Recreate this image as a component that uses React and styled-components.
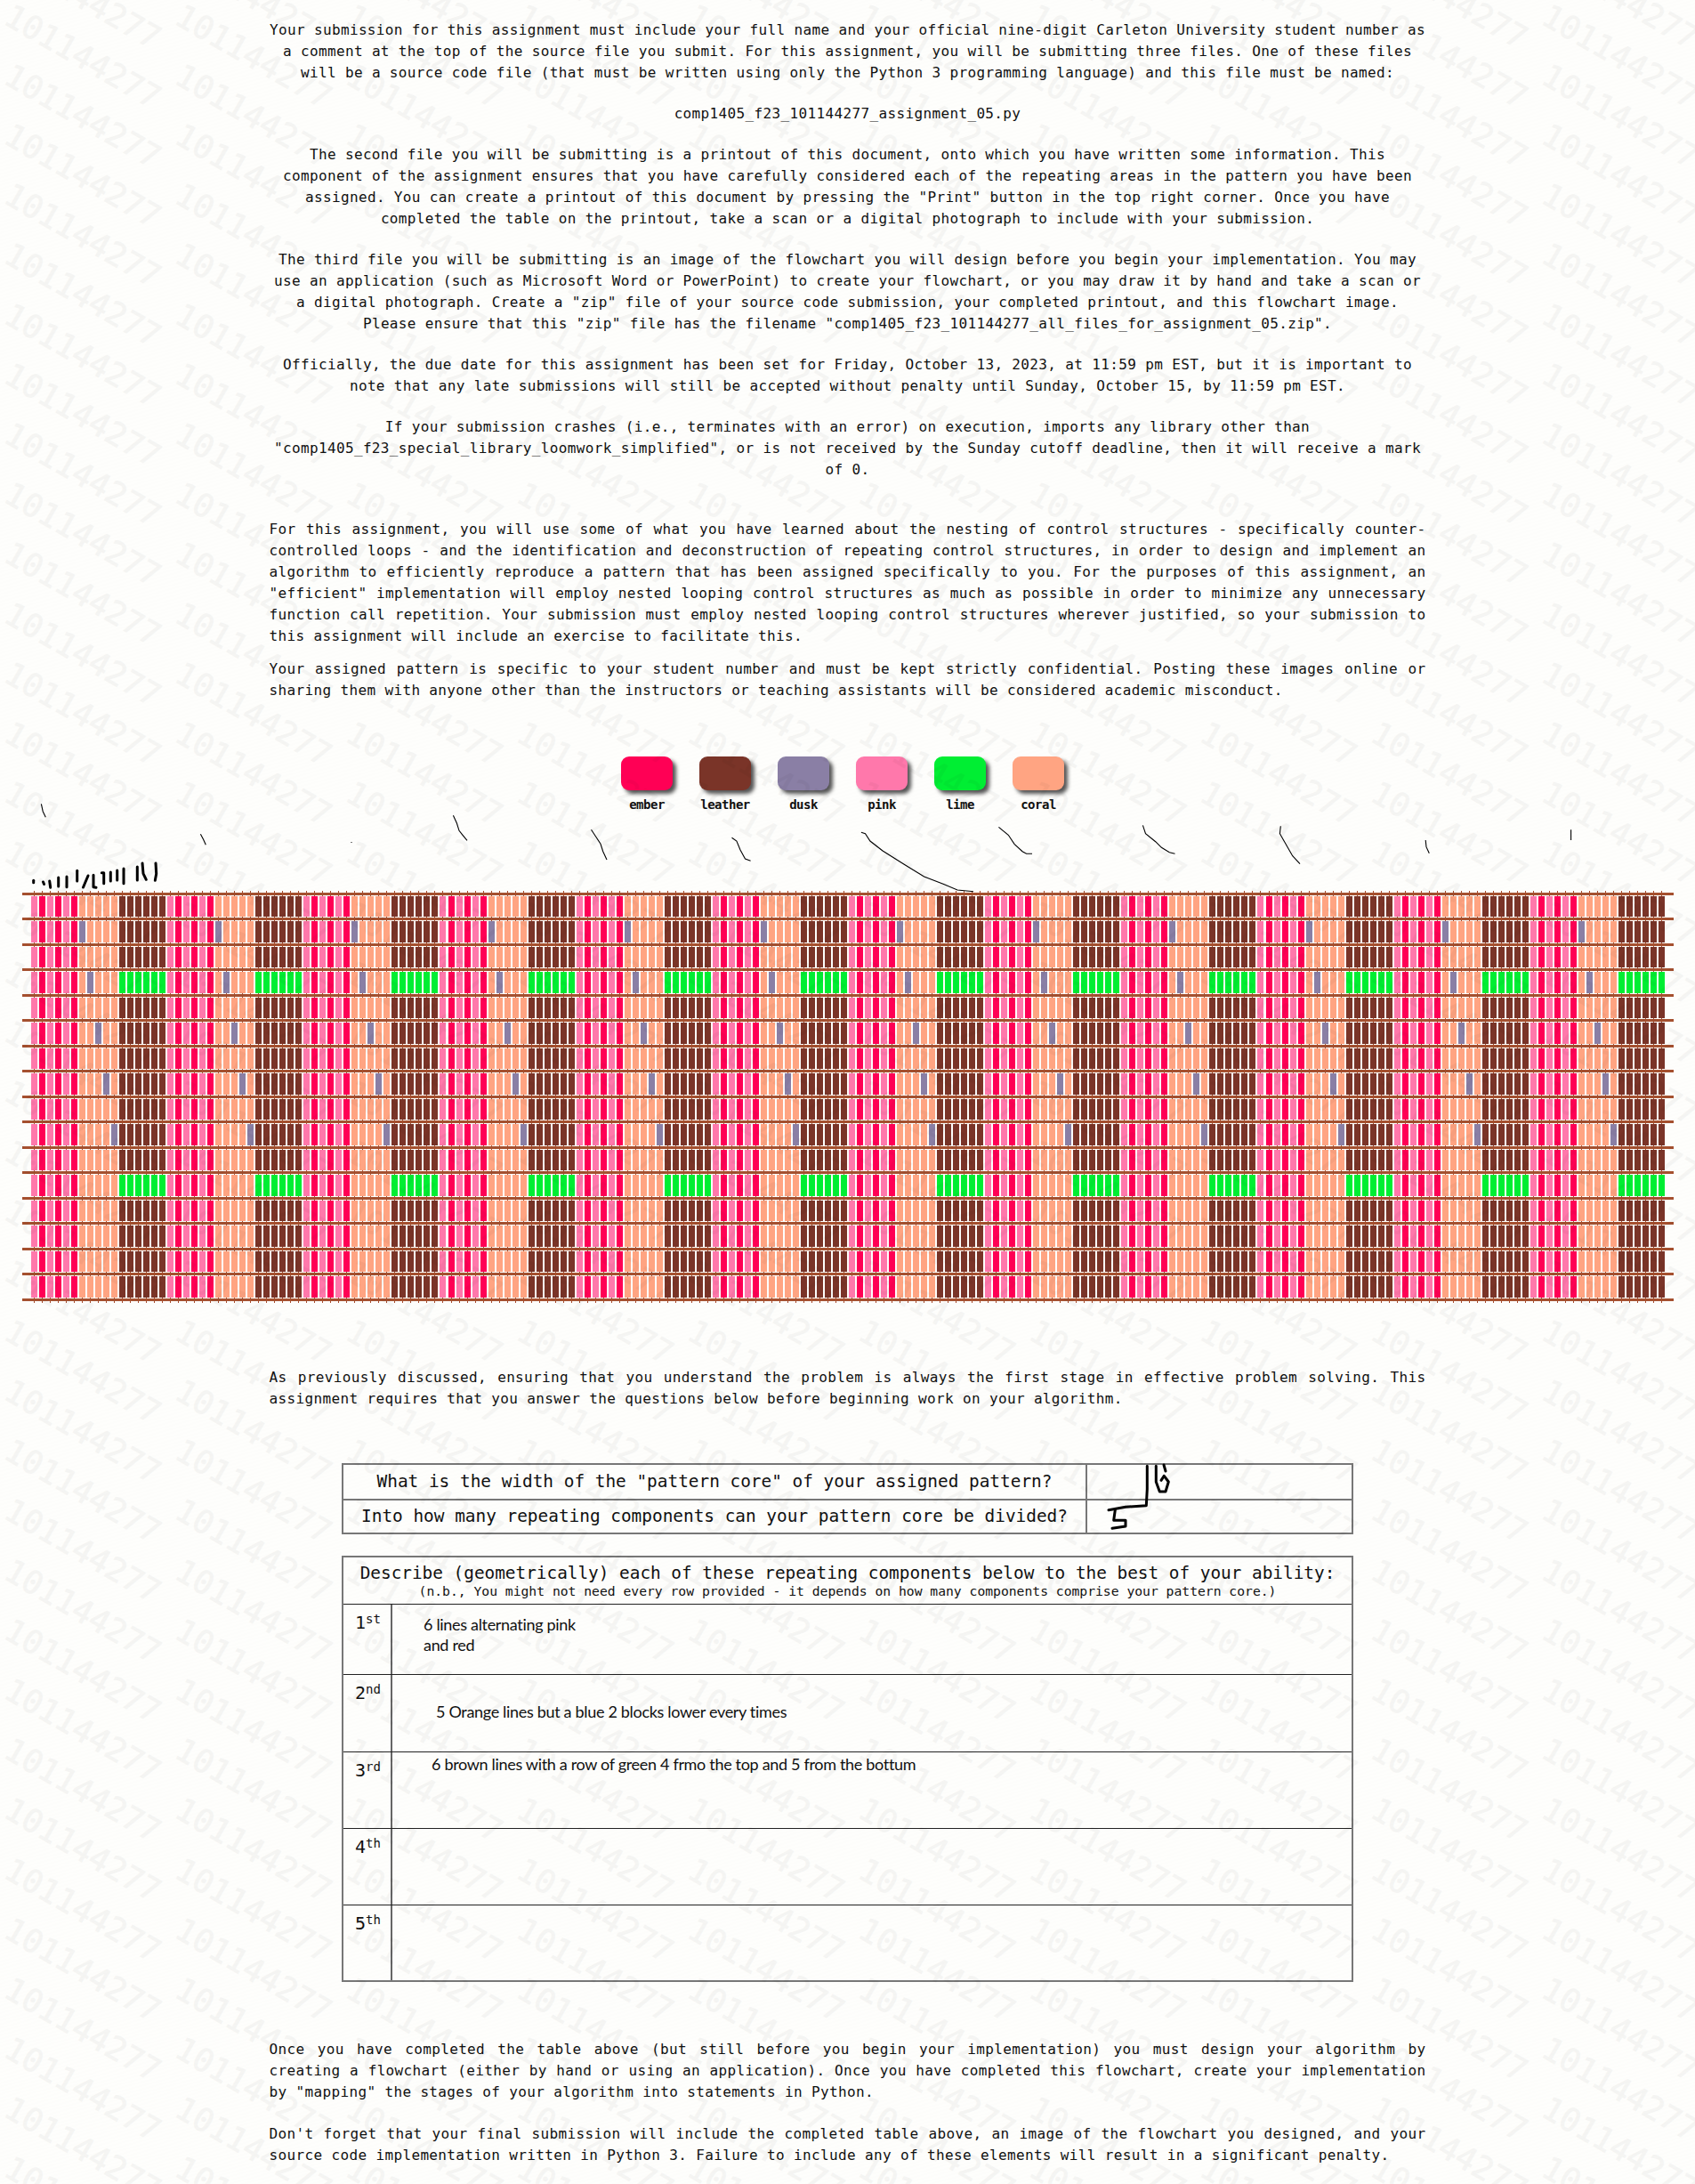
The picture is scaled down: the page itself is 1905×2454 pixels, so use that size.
import React from "react";
import styled, { createGlobalStyle } from "styled-components";

const Global = createGlobalStyle`
  html, body { margin: 0; padding: 0; }
  body { background: #fdfdfb; }
`;

const MONO = `"DejaVu Sans Mono", monospace`;

const Page = styled.div`
  position: relative;
  width: 1905px;
  height: 2454px;
  overflow: hidden;
  color: #111;
  font-family: ${MONO};
  font-size: 16px;
  line-height: 24px;
  background: repeating-linear-gradient(165deg, #fdfdfb 0 2px, #fefefc 2px 4px);
`;

const Watermark = styled.div`
  position: absolute;
  left: -3px;
  top: -37.5px;
  display: grid;
  grid-template-columns: repeat(11, 192px);
  grid-auto-rows: 67.2px;
  pointer-events: none;
  z-index: 5;
`;

const Stamp = styled.span`
  display: flex;
  align-items: center;
  justify-content: center;
  white-space: nowrap;
  font-family: ${MONO};
  font-size: 36px;
  color: #000;
  -webkit-text-stroke: 0.8px #000;
  opacity: 0.032;
  transform: rotate(30deg);
`;

const Column = styled.section`
  width: 1300px;
  margin: ${(p) => p.$top || 0}px auto 0;
  letter-spacing: 0.36px;
`;

const Centered = styled.p`
  margin: 0 0 22px;
  text-align: center;
`;

const Justified = styled.p`
  margin: 0 0 ${(p) => p.$gap || 13}px;
  text-align: justify;
`;

const Legend = styled.div`
  display: flex;
  gap: 30px;
  justify-content: center;
  padding-right: 11px;
  margin-top: 62px;
`;

const LegendItem = styled.div`
  width: 58px;
  display: flex;
  flex-direction: column;
  align-items: center;
`;

const Swatch = styled.div`
  width: 58px;
  height: 38px;
  border-radius: 9px;
  background: ${(p) => p.$color};
  box-shadow: 4px 4px 4px #555;
`;

const SwatchLabel = styled.span`
  margin-top: 7px;
  font-size: 14px;
  line-height: 18px;
  font-weight: 700;
  letter-spacing: -0.5px;
`;

const Loom = styled.svg`
  display: block;
  margin-top: 87px;
`;

const Scribbles = styled.svg`
  position: absolute;
  left: 0;
  top: 0;
  pointer-events: none;
  z-index: 4;
`;

const AnswerTable = styled.div`
  width: 1137px;
  box-sizing: border-box;
  margin: ${(p) => p.$top}px auto 0;
  border: 2px solid #777;
  font-size: 19.4px;
`;

const QuestionRow = styled.div`
  display: grid;
  grid-template-columns: 836px 1fr;
  height: 38px;
  box-sizing: border-box;
  border-top: ${(p) => (p.$first ? "none" : "2px solid #777")};
`;

const Question = styled.div`
  display: flex;
  align-items: center;
  justify-content: center;
  border-right: 2px solid #777;
`;

const Answer = styled.div``;

const DescribeHead = styled.div`
  height: 53px;
  box-sizing: border-box;
  text-align: center;
  border-bottom: 1px solid #222;
  padding-top: 5px;
  font-size: 19.36px;
  line-height: 25px;
`;

const Note = styled.div`
  font-size: 14.7px;
  line-height: 15px;
`;

const DescribeRow = styled.div`
  display: grid;
  grid-template-columns: 55px 1fr;
  height: ${(p) => p.$height}px;
  box-sizing: border-box;
  border-top: ${(p) => (p.$first ? "none" : "1px solid #222")};
`;

const Ordinal = styled.div`
  border-right: 2px solid #666;
  padding: 8px 0 0 13px;
  font-size: 20px;
  line-height: 24px;
  sup {
    font-size: 14px;
    line-height: 0;
    vertical-align: 6px;
  }
`;

const HandText = styled.div`
  font-family: Lato, "Open Sans", sans-serif;
  font-size: 18px;
  line-height: 23px;
  letter-spacing: -0.32px;
  color: #111;
  padding: ${(p) => p.$top}px 0 0 ${(p) => p.$left}px;
`;

const COLORS = {
  ember: "#ff0055",
  leather: "#7a3428",
  dusk: "#8a7fa5",
  pink: "#ff78ab",
  lime: "#00ee33",
  coral: "#ffa482",
};

const DUSK = { 1: 6, 3: 7, 5: 8, 7: 9, 9: 10 };
const LIME_ROWS = [3, 11];
const PITCH = 9.0098;
const ROW = 28.5;
const COUNT = 204;
const ROWS = 16;

function cellColor(row, col) {
  const c = col % 17;
  if (c < 6) return c % 2 === 0 ? COLORS.pink : COLORS.ember;
  if (c < 11) return DUSK[row] === c ? COLORS.dusk : COLORS.coral;
  return LIME_ROWS.includes(row) ? COLORS.lime : COLORS.leather;
}

const WEAVE = [];
for (let k = 0; k < COUNT; k++) {
  WEAVE.push(
    <rect key={`t${k}`} x={38 + k * PITCH} y={1} width={1} height={463} fill="#a34a2d" />
  );
}
for (let i = 0; i <= ROWS; i++) {
  WEAVE.push(
    <rect key={`l${i}`} x={25} y={2.5 + i * ROW} width={1856} height={3} fill="#a5502f" />
  );
}
for (let r = 0; r < ROWS; r++) {
  for (let k = 0; k < COUNT; k++) {
    WEAVE.push(
      <rect
        key={`b${r}-${k}`}
        x={35 + k * PITCH}
        y={6.6 + r * ROW}
        width={7}
        height={23.5}
        fill={cellColor(r, k)}
      />
    );
  }
}

const THIN = [
  "46.4,903.3 48.2,911.7 51.3,918.3",
  "225.4,937.3 228.6,943.3 231.3,949.3",
  "394.5,946.5 395.5,946.5",
  "509.4,916.3 513.4,925 516,933.3 520,938.3 525,944.3",
  "664.5,932.3 669.6,940 675,948.3 677.7,956.7 682,966",
  "822.5,941.3 827.9,945 832,955 837.5,965 843.6,967.3",
  "967.9,935.3 972.5,936.7 977.9,945 992,956 1017,971.7 1038.6,985 1060,993.3 1076,1000 1094,1001.7",
  "1122.4,929.3 1133.3,938.3 1140,948.3 1149,956.7 1153.6,959.3 1160,959.3",
  "1284.4,927.3 1287.5,936.7 1298.7,945.7 1305.4,952.3 1314.3,957.7 1320.5,959.3",
  "1439.3,928.3 1438.4,936.7 1446,950 1452.7,961.7 1461,970.7",
  "1602.2,944 1603,951.7 1606.3,958.7",
  "1765.6,932.3 1765.6,944",
];

const THICK = [
  "37.7,989.3 37.7,991.7",
  "48.5,991 49.5,993.5",
  "55.7,990 56.7,997.3",
  "65.7,986 65.7,996",
  "75,985 75,996.7",
  "86.7,978.3 86.7,990",
  "93.5,997 99,984",
  "105,983.3 105,996.7 108,997.3",
  "114.3,980.7 116.7,980.7 116.7,992.7",
  "124.3,980 124.3,990",
  "131.7,978 131.7,989",
  "139,976 139,992.7",
  "154.3,974 154.3,989",
  "160,970 161,981.7 164.3,988.3",
  "175,970 175.7,981.7 174.3,989.3",
  "1289.3,1647.3 1289.3,1673.3 1288.3,1691.7 1265,1693.3 1246,1696.7",
  "1299.3,1647.3 1299.3,1665 1303.3,1676 1310,1676 1313.3,1665 1308.3,1658.3 1305,1663.3",
  "1308,1646 1310,1653",
  "1253.3,1696.7 1251.7,1708.3 1265,1708.3 1265,1715 1250,1717.3",
];

const STAMPS = Array.from({ length: 11 * 38 }, (_, i) => <Stamp key={i}>101144277</Stamp>);

const LEGEND = ["ember", "leather", "dusk", "pink", "lime", "coral"];

export default function App() {
  return (
    <Page>
      <Global />
      <Column $top={22}>
        <Centered>
          Your submission for this assignment must include your full name and your official nine-digit Carleton University student number as a comment at the top of the source file you submit. For this assignment, you will be submitting three files. One of these files will be a source code file (that must be written using only the Python 3 programming language) and this file must be named:
        </Centered>
        <Centered>comp1405_f23_101144277_assignment_05.py</Centered>
        <Centered>
          The second file you will be submitting is a printout of this document, onto which you have written some information. This component of the assignment ensures that you have carefully considered each of the repeating areas in the pattern you have been assigned. You can create a printout of this document by pressing the "Print" button in the top right corner. Once you have completed the table on the printout, take a scan or a digital photograph to include with your submission.
        </Centered>
        <Centered>
          The third file you will be submitting is an image of the flowchart you will design before you begin your implementation. You may use an application (such as Microsoft Word or PowerPoint) to create your flowchart, or you may draw it by hand and take a scan or a digital photograph. Create a "zip" file of your source code submission, your completed printout, and this flowchart image. Please ensure that this "zip" file has the filename "comp1405_f23_101144277_all_files_for_assignment_05.zip".
        </Centered>
        <Centered>
          Officially, the due date for this assignment has been set for Friday, October 13, 2023, at 11:59 pm EST, but it is important to note that any late submissions will still be accepted without penalty until Sunday, October 15, by 11:59 pm EST.
        </Centered>
        <Centered>
          If your submission crashes (i.e., terminates with an error) on execution, imports any library other than "comp1405_f23_special_library_loomwork_simplified", or is not received by the Sunday cutoff deadline, then it will receive a mark of 0.
        </Centered>
      </Column>
      <Column $top={43}>
        <Justified>
          For this assignment, you will use some of what you have learned about the nesting of control structures - specifically counter-controlled loops - and the identification and deconstruction of repeating control structures, in order to design and implement an algorithm to efficiently reproduce a pattern that has been assigned specifically to you. For the purposes of this assignment, an "efficient" implementation will employ nested looping control structures as much as possible in order to minimize any unnecessary function call repetition. Your submission must employ nested looping control structures wherever justified, so your submission to this assignment will include an exercise to facilitate this.
        </Justified>
        <Justified>
          Your assigned pattern is specific to your student number and must be kept strictly confidential. Posting these images online or sharing them with anyone other than the instructors or teaching assistants will be considered academic misconduct.
        </Justified>
      </Column>
      <Legend>
        {LEGEND.map((name) => (
          <LegendItem key={name}>
            <Swatch $color={COLORS[name]} />
            <SwatchLabel>{name}</SwatchLabel>
          </LegendItem>
        ))}
      </Legend>
      <Loom width="1905" height="466" viewBox="0 0 1905 466" shapeRendering="crispEdges">
        {WEAVE}
      </Loom>
      <Column $top={70}>
        <Justified>
          As previously discussed, ensuring that you understand the problem is always the first stage in effective problem solving. This assignment requires that you answer the questions below before beginning work on your algorithm.
        </Justified>
      </Column>
      <AnswerTable $top={60}>
        <QuestionRow $first>
          <Question>What is the width of the "pattern core" of your assigned pattern?</Question>
          <Answer />
        </QuestionRow>
        <QuestionRow>
          <Question>Into how many repeating components can your pattern core be divided?</Question>
          <Answer />
        </QuestionRow>
      </AnswerTable>
      <AnswerTable $top={24}>
        <DescribeHead>
          Describe (geometrically) each of these repeating components below to the best of your ability:
          <Note>(n.b., You might not need every row provided - it depends on how many components comprise your pattern core.)</Note>
        </DescribeHead>
        <DescribeRow $first $height={78}>
          <Ordinal>1<sup>st</sup></Ordinal>
          <HandText $top={11} $left={35}>6 lines alternating pink<br />and red</HandText>
        </DescribeRow>
        <DescribeRow $height={87}>
          <Ordinal>2<sup>nd</sup></Ordinal>
          <HandText $top={30} $left={49}>5 Orange lines but a blue 2 blocks lower every times</HandText>
        </DescribeRow>
        <DescribeRow $height={86}>
          <Ordinal>3<sup>rd</sup></Ordinal>
          <HandText $top={2} $left={44}>6 brown lines with a row of green 4 frmo the top and 5 from the bottum</HandText>
        </DescribeRow>
        <DescribeRow $height={86}>
          <Ordinal>4<sup>th</sup></Ordinal>
        </DescribeRow>
        <DescribeRow $height={85}>
          <Ordinal>5<sup>th</sup></Ordinal>
        </DescribeRow>
      </AnswerTable>
      <Column $top={64}>
        <Justified $gap={23}>
          Once you have completed the table above (but still before you begin your implementation) you must design your algorithm by creating a flowchart (either by hand or using an application). Once you have completed this flowchart, create your implementation by "mapping" the stages of your algorithm into statements in Python.
        </Justified>
        <Justified>
          Don't forget that your final submission will include the completed table above, an image of the flowchart you designed, and your source code implementation written in Python 3. Failure to include any of these elements will result in a significant penalty.
        </Justified>
      </Column>
      <Scribbles width="1905" height="2454" viewBox="0 0 1905 2454" fill="none" stroke="#000">
        {THIN.map((pts, i) => (
          <polyline key={i} points={pts} strokeWidth="1.1" />
        ))}
        {THICK.map((pts, i) => (
          <polyline key={i} points={pts} strokeWidth="3" strokeLinecap="round" strokeLinejoin="round" />
        ))}
      </Scribbles>
      <Watermark aria-hidden="true">{STAMPS}</Watermark>
    </Page>
  );
}
